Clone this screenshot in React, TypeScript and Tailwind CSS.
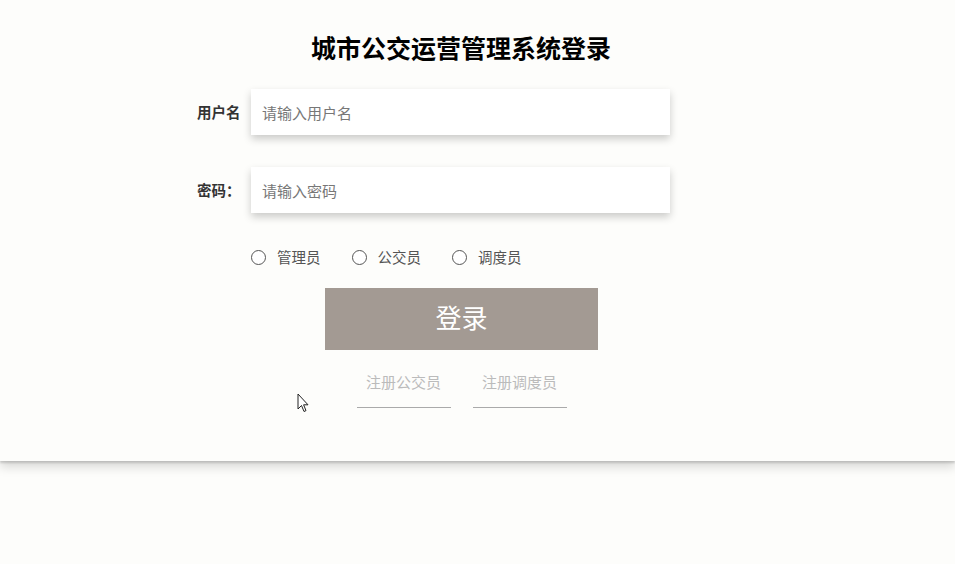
import { useState } from "react";

const roles = ["管理员", "公交员", "调度员"];

function Cursor() {
    return (
        <svg className="absolute left-[297px] top-[393px]" width="12" height="20" viewBox="0 0 12 20">
            <path d="M1 1 L1 16 L4.5 12.5 L7 18.5 L9 17.6 L6.6 11.8 L11 11.8 Z" fill="#fff" stroke="#222" strokeWidth="1" strokeLinejoin="round" />
        </svg>
    );
}

export default function App() {
    const [role, setRole] = useState("");

    return (
        <div className="relative min-h-[564px] bg-[#fdfdfb]" style={{ fontFamily: '"Noto Sans CJK SC", "Noto Sans", sans-serif' }}>
            <div className="h-[461px] bg-[#fdfdfb] shadow-[0_2px_2px_rgba(0,0,0,0.15),0_6px_10px_rgba(0,0,0,0.15)] relative z-10">
                <div className="w-[922px] pt-[31px]">
                    <h1 className="text-center text-[25px] leading-[33px] font-bold text-black">城市公交运营管理系统登录</h1>

                    <div className="pl-[197px] mt-[25px] flex flex-col gap-[32px]">
                        <div className="flex items-center">
                            <label className="w-[54px] text-[14.5px] font-bold text-[#333]">用户名</label>
                            <input
                                className="w-[419px] h-[46px] bg-white px-[11px] text-[15px] text-[#333] placeholder:text-[#777] outline-none shadow-[0_4px_8px_rgba(0,0,0,0.2)]"
                                placeholder="请输入用户名"
                            />
                        </div>
                        <div className="flex items-center">
                            <label className="w-[54px] text-[14.5px] font-bold text-[#333]">密码：</label>
                            <input
                                type="password"
                                className="w-[419px] h-[46px] bg-white px-[11px] text-[15px] text-[#333] placeholder:text-[#777] outline-none shadow-[0_4px_8px_rgba(0,0,0,0.2)]"
                                placeholder="请输入密码"
                            />
                        </div>
                    </div>

                    <div className="pl-[251px] mt-[34px] flex items-center gap-[31px]">
                        {roles.map((r) => (
                            <label key={r} className="flex items-center gap-[11px] cursor-pointer" onClick={() => setRole(r)}>
                                <span className="w-[15px] h-[15px] rounded-full border border-[#555] bg-white flex items-center justify-center">
                                    {role === r && <span className="w-[7px] h-[7px] rounded-full bg-[#555]" />}
                                </span>
                                <span className="text-[14.5px] leading-[20px] text-[#555]">{r}</span>
                            </label>
                        ))}
                    </div>

                    <div className="pl-[325px] mt-[21px]">
                        <button className="w-[273px] h-[62px] pb-[5px] bg-[#a39a93] text-white text-[26px]">登录</button>
                        <div className="w-[273px] mt-[20px] flex justify-center gap-[22px]">
                            <a className="w-[94px] text-center text-[15px] leading-[24px] text-[#bbb] border-b border-[#aaa] pb-[13px]">注册公交员</a>
                            <a className="w-[94px] text-center text-[15px] leading-[24px] text-[#bbb] border-b border-[#aaa] pb-[13px]">注册调度员</a>
                        </div>
                    </div>
                </div>
                <Cursor />
            </div>
        </div>
    );
}
